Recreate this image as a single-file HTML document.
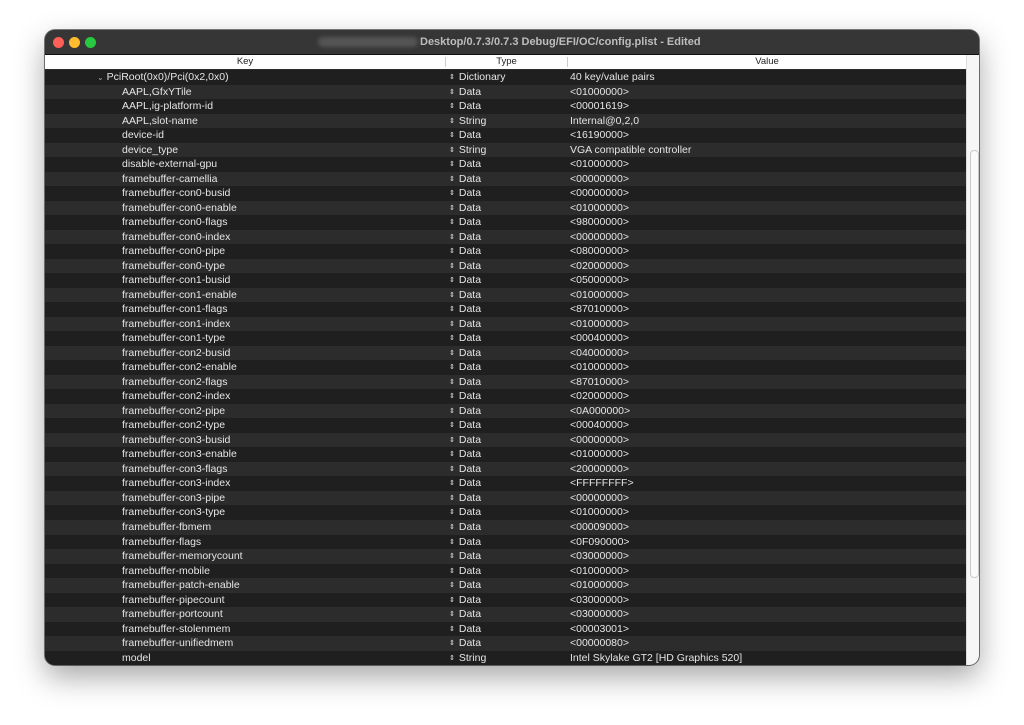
<!DOCTYPE html>
<html><head><meta charset="utf-8"><style>
body{margin:0;width:1024px;height:725px;background:#fff;overflow:hidden;font-family:"Liberation Sans",sans-serif;}
.win{position:absolute;left:45px;top:30px;width:934px;height:635px;border-radius:10px;background:#2b2b2b;overflow:hidden;box-shadow:0 12px 30px rgba(0,0,0,.35),0 0 0 1px rgba(0,0,0,.5);}
.title{height:24px;background:#363636;position:relative;border-bottom:1px solid #111;}
.dot{position:absolute;top:7px;width:11px;height:11px;border-radius:50%;}
.tt{position:absolute;left:273px;top:6px;color:#bdbdbd;font-size:11px;font-weight:bold;white-space:nowrap;}
.blur{display:inline-block;width:100px;height:10px;background:#555;border-radius:5px;filter:blur(2px);vertical-align:middle;margin-right:2px;}
.hdr{position:absolute;top:25px;left:0;width:921px;height:14px;background:#fff;font-size:9.5px;color:#222;}
.hdr span{position:absolute;top:1px;text-align:center;}
.sep{position:absolute;top:2px;width:1px;height:10px;background:#ccc;}
.rows{position:absolute;top:40px;left:0;width:921px;}
.r{height:14.52px;position:relative;font-size:10.5px;color:#e6e6e6;line-height:14.5px;}
.r:nth-child(odd){background:#1f1f1f}.r:nth-child(even){background:#2c2c2c}
.k{position:absolute;left:77px}.t{position:absolute;left:404px}.v{position:absolute;left:525px}
.t:before{content:"⇕";font-size:7px;margin-right:4px;vertical-align:1px;}
.sb{position:absolute;left:921px;top:25px;width:13px;height:610px;background:#f6f6f6;border-left:1px solid #ddd;}
.th{position:absolute;left:3px;top:95px;width:7px;height:426px;border:1px solid #c8c8c8;border-radius:4px;background:#fafafa;}
</style></head><body>
<div class="win">
<div class="title">
<div class="dot" style="left:8px;background:#fe5f57"></div>
<div class="dot" style="left:24px;background:#febc2e"></div>
<div class="dot" style="left:40px;background:#28c840"></div>
<div class="tt"><span class="blur"></span>Desktop/0.7.3/0.7.3 Debug/EFI/OC/config.plist - Edited</div>
</div>
<div class="hdr"><span style="left:0;width:400px">Key</span><div class="sep" style="left:400px"></div><span style="left:401px;width:121px">Type</span><div class="sep" style="left:522px"></div><span style="left:523px;width:398px">Value</span></div>
<div class="rows">
<div class="r"><span class="k" style="left:52px"><span style="font-size:8px;color:#aaa">⌄</span> PciRoot(0x0)/Pci(0x2,0x0)</span><span class="t">Dictionary</span><span class="v">40 key/value pairs</span></div>
<div class="r"><span class="k">AAPL,GfxYTile</span><span class="t">Data</span><span class="v">&lt;01000000&gt;</span></div>
<div class="r"><span class="k">AAPL,ig-platform-id</span><span class="t">Data</span><span class="v">&lt;00001619&gt;</span></div>
<div class="r"><span class="k">AAPL,slot-name</span><span class="t">String</span><span class="v">Internal@0,2,0</span></div>
<div class="r"><span class="k">device-id</span><span class="t">Data</span><span class="v">&lt;16190000&gt;</span></div>
<div class="r"><span class="k">device_type</span><span class="t">String</span><span class="v">VGA compatible controller</span></div>
<div class="r"><span class="k">disable-external-gpu</span><span class="t">Data</span><span class="v">&lt;01000000&gt;</span></div>
<div class="r"><span class="k">framebuffer-camellia</span><span class="t">Data</span><span class="v">&lt;00000000&gt;</span></div>
<div class="r"><span class="k">framebuffer-con0-busid</span><span class="t">Data</span><span class="v">&lt;00000000&gt;</span></div>
<div class="r"><span class="k">framebuffer-con0-enable</span><span class="t">Data</span><span class="v">&lt;01000000&gt;</span></div>
<div class="r"><span class="k">framebuffer-con0-flags</span><span class="t">Data</span><span class="v">&lt;98000000&gt;</span></div>
<div class="r"><span class="k">framebuffer-con0-index</span><span class="t">Data</span><span class="v">&lt;00000000&gt;</span></div>
<div class="r"><span class="k">framebuffer-con0-pipe</span><span class="t">Data</span><span class="v">&lt;08000000&gt;</span></div>
<div class="r"><span class="k">framebuffer-con0-type</span><span class="t">Data</span><span class="v">&lt;02000000&gt;</span></div>
<div class="r"><span class="k">framebuffer-con1-busid</span><span class="t">Data</span><span class="v">&lt;05000000&gt;</span></div>
<div class="r"><span class="k">framebuffer-con1-enable</span><span class="t">Data</span><span class="v">&lt;01000000&gt;</span></div>
<div class="r"><span class="k">framebuffer-con1-flags</span><span class="t">Data</span><span class="v">&lt;87010000&gt;</span></div>
<div class="r"><span class="k">framebuffer-con1-index</span><span class="t">Data</span><span class="v">&lt;01000000&gt;</span></div>
<div class="r"><span class="k">framebuffer-con1-type</span><span class="t">Data</span><span class="v">&lt;00040000&gt;</span></div>
<div class="r"><span class="k">framebuffer-con2-busid</span><span class="t">Data</span><span class="v">&lt;04000000&gt;</span></div>
<div class="r"><span class="k">framebuffer-con2-enable</span><span class="t">Data</span><span class="v">&lt;01000000&gt;</span></div>
<div class="r"><span class="k">framebuffer-con2-flags</span><span class="t">Data</span><span class="v">&lt;87010000&gt;</span></div>
<div class="r"><span class="k">framebuffer-con2-index</span><span class="t">Data</span><span class="v">&lt;02000000&gt;</span></div>
<div class="r"><span class="k">framebuffer-con2-pipe</span><span class="t">Data</span><span class="v">&lt;0A000000&gt;</span></div>
<div class="r"><span class="k">framebuffer-con2-type</span><span class="t">Data</span><span class="v">&lt;00040000&gt;</span></div>
<div class="r"><span class="k">framebuffer-con3-busid</span><span class="t">Data</span><span class="v">&lt;00000000&gt;</span></div>
<div class="r"><span class="k">framebuffer-con3-enable</span><span class="t">Data</span><span class="v">&lt;01000000&gt;</span></div>
<div class="r"><span class="k">framebuffer-con3-flags</span><span class="t">Data</span><span class="v">&lt;20000000&gt;</span></div>
<div class="r"><span class="k">framebuffer-con3-index</span><span class="t">Data</span><span class="v">&lt;FFFFFFFF&gt;</span></div>
<div class="r"><span class="k">framebuffer-con3-pipe</span><span class="t">Data</span><span class="v">&lt;00000000&gt;</span></div>
<div class="r"><span class="k">framebuffer-con3-type</span><span class="t">Data</span><span class="v">&lt;01000000&gt;</span></div>
<div class="r"><span class="k">framebuffer-fbmem</span><span class="t">Data</span><span class="v">&lt;00009000&gt;</span></div>
<div class="r"><span class="k">framebuffer-flags</span><span class="t">Data</span><span class="v">&lt;0F090000&gt;</span></div>
<div class="r"><span class="k">framebuffer-memorycount</span><span class="t">Data</span><span class="v">&lt;03000000&gt;</span></div>
<div class="r"><span class="k">framebuffer-mobile</span><span class="t">Data</span><span class="v">&lt;01000000&gt;</span></div>
<div class="r"><span class="k">framebuffer-patch-enable</span><span class="t">Data</span><span class="v">&lt;01000000&gt;</span></div>
<div class="r"><span class="k">framebuffer-pipecount</span><span class="t">Data</span><span class="v">&lt;03000000&gt;</span></div>
<div class="r"><span class="k">framebuffer-portcount</span><span class="t">Data</span><span class="v">&lt;03000000&gt;</span></div>
<div class="r"><span class="k">framebuffer-stolenmem</span><span class="t">Data</span><span class="v">&lt;00003001&gt;</span></div>
<div class="r"><span class="k">framebuffer-unifiedmem</span><span class="t">Data</span><span class="v">&lt;00000080&gt;</span></div>
<div class="r"><span class="k">model</span><span class="t">String</span><span class="v">Intel Skylake GT2 [HD Graphics 520]</span></div>
</div>
<div class="sb"><div class="th"></div></div>
</div>
</body></html>
